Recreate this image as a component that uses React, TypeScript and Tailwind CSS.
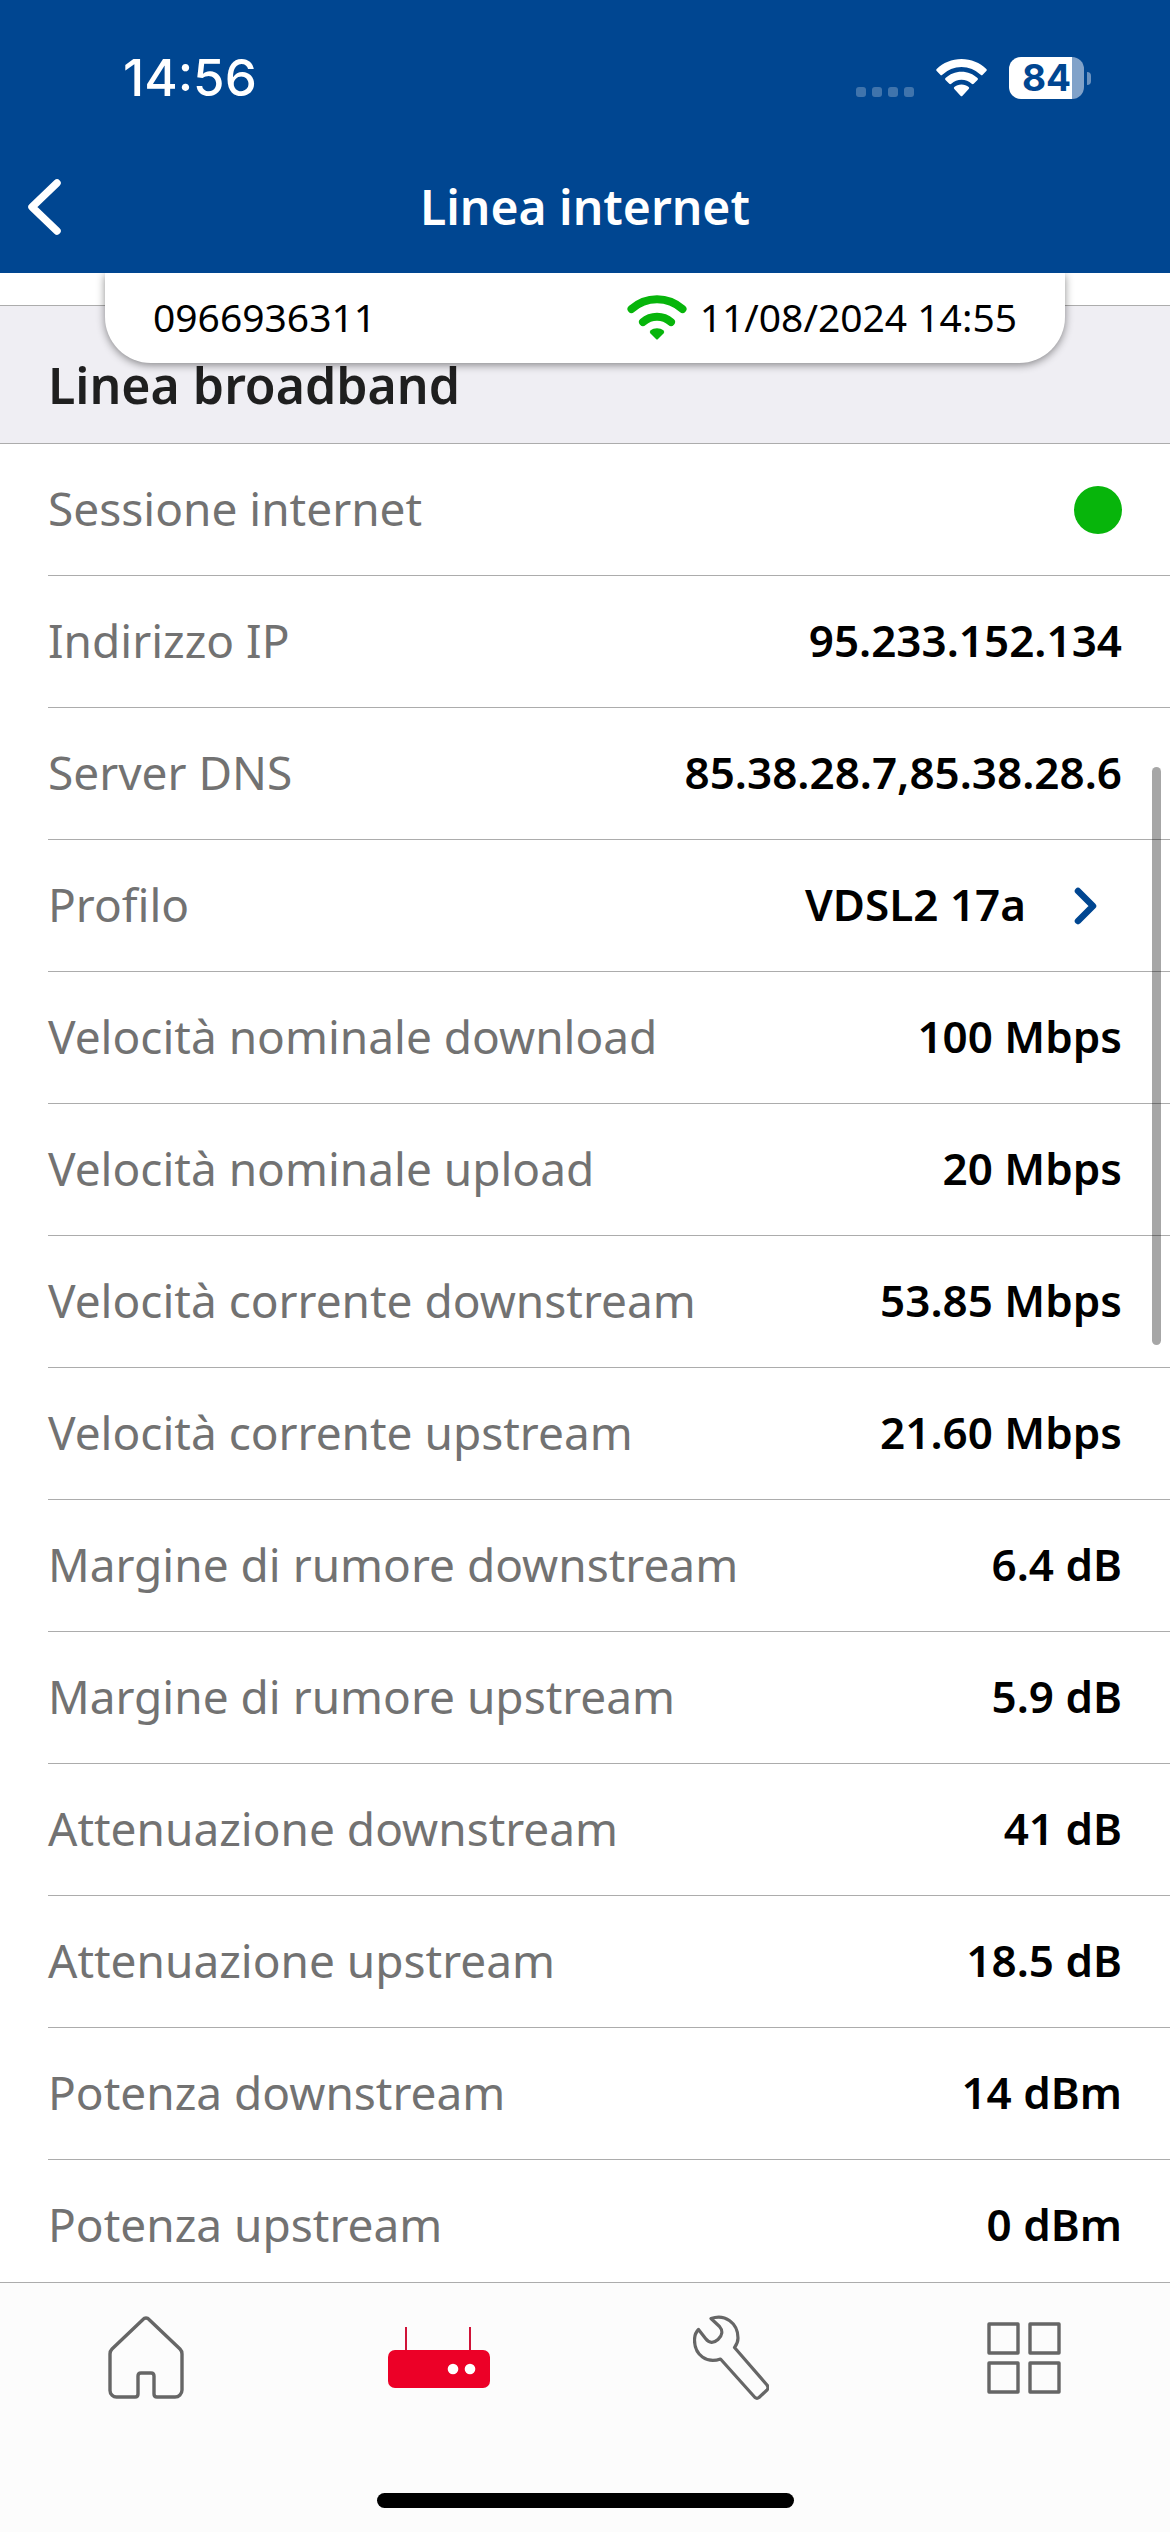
import { ReactNode } from 'react';

interface IRow {
    label: string;
    value?: string;
    online?: boolean;
    link?: boolean;
}

interface ITab {
    name: string;
    icon: ReactNode;
}

const rows: IRow[] = [
    { label: 'Sessione internet', online: true },
    { label: 'Indirizzo IP', value: '95.233.152.134' },
    { label: 'Server DNS', value: '85.38.28.7,85.38.28.6' },
    { label: 'Profilo', value: 'VDSL2 17a', link: true },
    { label: 'Velocità nominale download', value: '100 Mbps' },
    { label: 'Velocità nominale upload', value: '20 Mbps' },
    { label: 'Velocità corrente downstream', value: '53.85 Mbps' },
    { label: 'Velocità corrente upstream', value: '21.60 Mbps' },
    { label: 'Margine di rumore downstream', value: '6.4 dB' },
    { label: 'Margine di rumore upstream', value: '5.9 dB' },
    { label: 'Attenuazione downstream', value: '41 dB' },
    { label: 'Attenuazione upstream', value: '18.5 dB' },
    { label: 'Potenza downstream', value: '14 dBm' },
    { label: 'Potenza upstream', value: '0 dBm' },
];

const tabs: ITab[] = [
    {
        name: 'Home',
        icon: (
            <svg className="h-[84px] w-[76px]" viewBox="0 0 76 84" fill="none" stroke="#666666" strokeWidth="3.4" strokeLinejoin="round">
                <path d="M35 3.4a4 4 0 0 1 6 0l31 29.6q2 2 2 5v36a7 7 0 0 1-7 7H49q-3 0-3-3V60q0-3-3-3H33q-3 0-3 3v18q0 3-3 3H9a6.500 6.500 0 0 1-7-6.500V38q0-3 2-5z" />
            </svg>
        ),
    },
    {
        name: 'Modem',
        icon: (
            <svg className="h-[64px] w-[104px]" viewBox="0 0 104 64">
                <path d="M19 1v26M83 1v26" stroke="#cf1338" strokeWidth="2" />
                <rect x="1" y="24" width="102" height="38" rx="7" fill="#ec0027" />
                <circle cx="66" cy="43" r="5.300" fill="#fff" />
                <circle cx="83" cy="43" r="5.300" fill="#fff" />
            </svg>
        ),
    },
    {
        name: 'Assistenza',
        icon: (
            <svg className="h-[88px] w-[76px]" viewBox="0 0 76 88" fill="none" stroke="#666666" strokeWidth="3.200" strokeLinejoin="round">
                <path d="M18 4.500C32-.5 45 9 45 24c0 4-1.500 7-3.500 9.500L74 71q2 3 0 5l-8 7.500q-2 1.500-4 0L27.500 45C14 50 1.500 41 1.500 26c0-4 1.500-8 4-10.500l7 9c4 5 8 5 12.500 1s5-9 1.500-13z" />
            </svg>
        ),
    },
    {
        name: 'Altro',
        icon: (
            <svg className="h-[74px] w-[74px]" viewBox="0 0 74 74" fill="none" stroke="#666666" strokeWidth="3.400" strokeLinejoin="round">
                <rect x="2" y="3" width="29" height="29" />
                <rect x="43" y="3" width="29" height="29" />
                <rect x="2" y="42" width="29" height="29" />
                <rect x="43" y="42" width="29" height="29" />
            </svg>
        ),
    },
];

const StatusBar = () => {
    return (
        <div className="flex h-[156px] items-center pr-[79px] pl-[123px] text-white">
            <span className="font-[Inter,sans-serif] text-[51px] leading-[60px] font-medium">14:56</span>
            <div className="ml-auto flex items-center">
                <div className="mt-[27px] flex gap-1.5 opacity-25">
                    <i className="h-[10px] w-[10px] rounded-[3px] bg-white" />
                    <i className="h-[10px] w-[10px] rounded-[3px] bg-white" />
                    <i className="h-[10px] w-[10px] rounded-[3px] bg-white" />
                    <i className="h-[10px] w-[10px] rounded-[3px] bg-white" />
                </div>
                <svg className="ml-[22px] h-[38px] w-[51px]" viewBox="0 0 51 38" fill="currentColor">
                    <path d="M25.500 0C35 0 44 3.700 50.300 10q1 1 0 2l-3.600 3.700q-1 1-2 0a27.500 27.500 0 0 0-38.400 0q-1 1-2 0L.7 12q-1-1 0-2C7 3.700 16 0 25.500 0z" />
                    <path d="M25.500 12.700c6.200 0 11.800 2.400 16 6.300q1 1 0 2l-3.800 3.800q-1 .9-2 0a15 15 0 0 0-20.400 0q-1 .9-2 0L9.500 21q-1-1 0-2c4.200-3.900 9.800-6.300 16-6.300z" />
                    <path d="M25.500 25.400c2.800 0 5.300 1 7.200 2.600q1 1 0 2l-6.200 6.700q-1 1-2 0L18.300 30q-1-1 0-2c1.900-1.600 4.400-2.600 7.200-2.600z" />
                </svg>
                <div className="ml-[22px] flex h-[42px] w-[75px] items-center justify-center rounded-[12px] bg-linear-to-r from-white from-84% to-[#81a2c9] to-84%">
                    <span className="font-[Inter,sans-serif] text-[37px] leading-[42px] font-bold text-[#004691]">84</span>
                </div>
                <i className="ml-[3px] h-[13px] w-1 rounded-r-full bg-[#6b92bf]" />
            </div>
        </div>
    );
};

const InfoCard = () => {
    return (
        <div className="absolute inset-x-0 top-full overflow-hidden px-[105px] pb-4">
            <div className="flex h-[90px] items-center justify-between rounded-b-[46px] bg-white px-12 pb-0.5 text-[39px] leading-[50px] text-black shadow-[0_2px_8px_rgba(0,0,0,0.45)]">
                <span>0966936311</span>
                <span className="flex items-center gap-3">
                    <svg className="h-[46px] w-[62px]" viewBox="0 0 60 46" fill="none" stroke="#07b50b" strokeWidth="8" strokeLinecap="round">
                        <path d="M4.500 15a38 38 0 0 1 51 0" />
                        <path d="M16 28a21 21 0 0 1 28 0" />
                        <path d="M23.500 36.500c3.500-3 9.500-3 13 0q1.500 1.500 0 3L31 45q-1 1-2 0l-5.500-5.500q-1.500-1.500 0-3z" fill="#07b50b" stroke="none" />
                    </svg>
                    11/08/2024 14:55
                </span>
            </div>
        </div>
    );
};

const Row = ({ label, value, online, link }: IRow) => {
    return (
        <li className="ml-12 flex h-[132px] items-center justify-between border-b border-[#acacac] pr-12">
            <span className="pb-1 text-[46px] leading-[60px] text-[#727272]">{label}</span>
            {online && <span role="img" aria-label="Attiva" className="h-12 w-12 rounded-full bg-[#07b50b]" />}
            {value && !link && <span className="pb-1 text-[44px] leading-[60px] font-semibold text-black">{value}</span>}
            {link && (
                <button className="flex items-center gap-12 pr-6 text-[44px] leading-[60px] font-semibold text-black">
                    <span className="pb-1">{value}</span>
                    <svg className="h-[38px] w-[24px]" viewBox="0 0 24 38" fill="none" stroke="#004691" strokeWidth="6.500" strokeLinecap="round" strokeLinejoin="round">
                        <path d="M4 4l15 15L4 34" />
                    </svg>
                </button>
            )}
        </li>
    );
};

export default function App() {
    return (
        <div className="flex h-screen flex-col overflow-hidden bg-white font-['Noto_Sans',sans-serif]">
            <header className="relative z-10 shrink-0 bg-[#004691]">
                <StatusBar />
                <div className="grid h-[117px] grid-cols-[120px_1fr_120px] items-start text-white">
                    <button aria-label="Indietro" className="flex h-[102px] items-center pl-7">
                        <svg className="h-[64px] w-[34px]" viewBox="0 0 34 64" fill="none" stroke="currentColor" strokeWidth="7.500" strokeLinecap="round" strokeLinejoin="round">
                            <path d="M29 8L4 32l25 24" />
                        </svg>
                    </button>
                    <h1 className="text-center text-[48px] leading-[102px] font-semibold">Linea internet</h1>
                </div>
                <InfoCard />
            </header>

            <main className="relative min-h-0 flex-1 overflow-hidden pt-8">
                <h2 className="flex h-[139px] items-end border-y border-[#acacac] bg-[#efeef3] px-12 pb-[22px] text-[50px] leading-[72px] font-semibold text-[#1f1f1f]">Linea broadband</h2>
                <ul>
                    {rows.map((row) => (
                        <Row key={row.label} {...row} />
                    ))}
                </ul>
                <div className="absolute top-[494px] right-[9px] h-[578px] w-[9px] rounded-full bg-black/35" />
            </main>

            <footer className="flex h-[250px] shrink-0 flex-col justify-between border-t border-[#acacac] bg-[#fcfcfc] pb-6">
                <nav className="grid h-[150px] grid-cols-4">
                    {tabs.map((tab) => (
                        <button key={tab.name} aria-label={tab.name} className="flex items-center justify-center">
                            {tab.icon}
                        </button>
                    ))}
                </nav>
                <div className="mx-auto h-[15px] w-[417px] rounded-full bg-black" />
            </footer>
        </div>
    );
}
